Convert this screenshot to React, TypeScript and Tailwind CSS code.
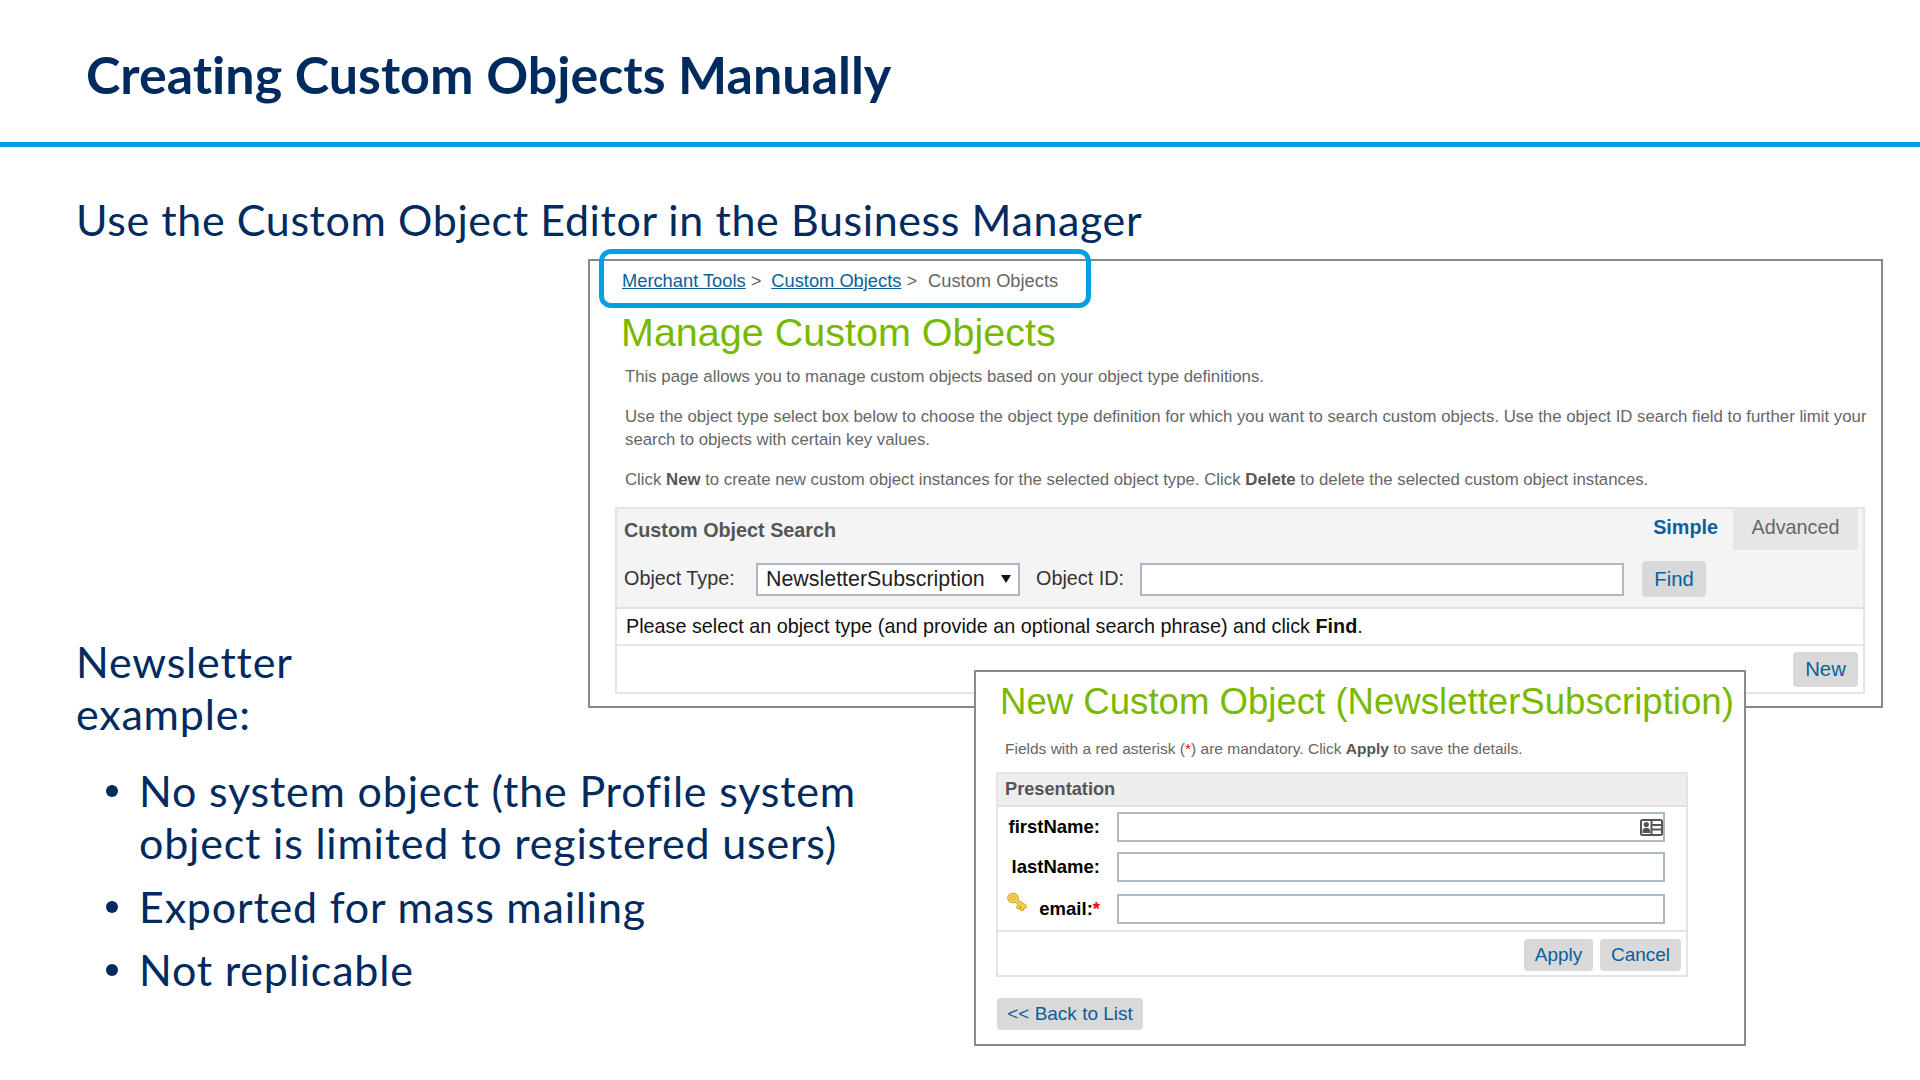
import React from 'react';

const navy = 'text-[#002b5f]';

const Btn = ({ label, className }: { label: string; className: string }) => (
  <button className={`flex items-center justify-center rounded-[4px] bg-[#d9d9d9] text-[#0b5e9c] ${className}`}>
    {label}
  </button>
);

const KeyIcon = () => (
  <svg viewBox="0 0 20 20" className="h-[20px] w-[20px]" fill="none" strokeLinecap="round">
    <g stroke="#c8981e" strokeWidth="4.4">
      <ellipse cx="6" cy="6" rx="3.6" ry="3" />
      <path d="M9 8.5 17.5 14.5M13.5 11.5 11.5 15M16.5 13.5 15 17" />
    </g>
    <g stroke="#f2cf4e" strokeWidth="2.8">
      <ellipse cx="6" cy="6" rx="3.6" ry="3" />
      <path d="M9 8.5 17.5 14.5M13.5 11.5 11.5 15M16.5 13.5 15 17" />
    </g>
  </svg>
);

const ContactIcon = () => (
  <svg viewBox="0 0 23 17" className="h-[17px] w-[23px]">
    <rect x="0" y="0" width="23" height="17" rx="2.5" fill="#555" />
    <rect x="2" y="2" width="19" height="13" fill="#fff" />
    <rect x="10.5" y="2" width="2" height="13" fill="#555" />
    <path d="M12 6h9M12 10.5h9" stroke="#555" strokeWidth="2" />
    <circle cx="6.3" cy="5.5" r="2.6" fill="#555" />
    <path d="M2.5 14v-1.8c0-2.5 1.8-3.4 3.8-3.4s3.8.9 3.8 3.4V14z" fill="#555" />
  </svg>
);

const Field = ({ label, star, icon, after }: { label: string; star?: boolean; icon?: boolean; after?: React.ReactNode }) => (
  <div className="flex h-[30px] items-center">
    <div className="relative flex w-[102px] justify-end text-[18.5px] font-bold text-black">
      {icon && (
        <span className="absolute left-[9px] top-[-3px]">
          <KeyIcon />
        </span>
      )}
      <span>{label}</span>
      {star && <span className="text-[#f00]">*</span>}
    </div>
    <div className="relative ml-[17px] h-[30px] w-[548px] border-2 border-[#aeb8c4] bg-white">
      {after}
    </div>
  </div>
);

const App = () => {
  return (
    <div className="h-[1080px] w-[1920px] overflow-hidden bg-white font-['Liberation_Sans',Arial,sans-serif]">
      <header className="flex h-[147px] items-center border-b-[5px] border-[#00a1e0] pl-[86px] pt-[5px]">
        <h1 className={`font-['Lato',sans-serif] text-[52px] font-bold [font-variant-ligatures:none] ${navy}`}>
          Creating Custom Objects Manually
        </h1>
      </header>

      <main className="pl-[76px]">
        <h2 className={`pt-[47px] font-['Lato',sans-serif] text-[43px] leading-[52px] tracking-[0.6px] ${navy}`}>
          Use the Custom Object Editor in the Business Manager
        </h2>

        <div className="flex">
          <aside className={`w-[512px] shrink-0 pt-[390px] font-['Lato',sans-serif] text-[43px] leading-[52px] tracking-[0.8px] ${navy}`}>
            <p className="w-[300px]">Newsletter example:</p>
            <ul className="mt-[25px] w-[800px] pl-[63px]">
              {['No system object (the Profile system object is limited to registered users)', 'Exported for mass mailing', 'Not replicable'].map(
                (item, i) => (
                  <li key={item} className={`relative w-[730px] ${i > 0 ? 'mt-[11.5px]' : ''}`}>
                    <span className="absolute left-[-33px] top-[20px] h-[12px] w-[12px] rounded-full bg-[#002b5f]" />
                    {item}
                  </li>
                )
              )}
            </ul>
          </aside>

          <section className="relative mt-[13px] flex w-[1295px] shrink-0 flex-col">
            <div className="relative h-[449px] border-2 border-[#888] bg-white pl-[25px] pr-[10px] text-[#666]">
              <div className="flex h-[31px] items-end gap-[5px] pl-[7px] text-[18.3px] leading-[22px]">
                <a className="text-[#0b5e9c] underline">Merchant Tools</a>
                <span className="mr-[5px]">&gt;</span>
                <a className="text-[#0b5e9c] underline">Custom Objects</a>
                <span className="mr-[6px]">&gt;</span>
                <span>Custom Objects</span>
              </div>
              <div className="pointer-events-none absolute left-[9px] top-[-12px] h-[59px] w-[492px] rounded-[12px] border-[5px] border-[#00a1e0]" />

              <h3 className="mt-[18px] pl-[6px] text-[39.5px] leading-[44px] text-[#78b900]">Manage Custom Objects</h3>
              <div className="pl-[10px] text-[16.8px] leading-[23px]">
                <p className="mt-[11px]">This page allows you to manage custom objects based on your object type definitions.</p>
                <p className="mt-[17px]">
                  Use the object type select box below to choose the object type definition for which you want to search custom objects. Use the object ID search field to further limit your search to objects with certain key values.
                </p>
                <p className="mt-[17px]">
                  Click <b className="text-[#555]">New</b> to create new custom object instances for the selected object type. Click <b className="text-[#555]">Delete</b> to delete the selected custom object instances.
                </p>
              </div>

              <div className="mt-[16px] h-[187px] w-[1250px] border-2 border-[#e4e4e4]">
                <div className="h-[100px] border-b-2 border-[#e0e0e0] bg-[#f4f4f4]">
                  <div className="flex h-[41px] items-center pl-[7px] pr-[5px]">
                    <span className="pt-[2px] text-[19.8px] font-bold text-[#555]">Custom Object Search</span>
                    <span className="mb-[3px] ml-auto mr-[15px] text-[19.8px] font-bold text-[#0b5e9c]">Simple</span>
                    <span className="flex h-[41px] w-[125px] items-center justify-center bg-[#e6e6e6] pb-[3px] text-[19.8px] text-[#666]">Advanced</span>
                  </div>
                  <div className="mt-[11px] flex items-center pl-[7px] text-[19.8px] text-[#333]">
                    <span className="w-[132px]">Object Type:</span>
                    <div className="flex h-[33px] w-[264px] items-center border-2 border-[#aeb8c4] bg-white pl-[8px] text-[21.4px] text-[#222]">
                      NewsletterSubscription
                      <svg viewBox="0 0 10 8" className="ml-[16px] h-[8px] w-[10px]">
                        <path d="M0 0h10L5 8z" fill="#111" />
                      </svg>
                    </div>
                    <span className="ml-[16px] w-[104px]">Object ID:</span>
                    <input className="h-[33px] w-[484px] border-2 border-[#aeb8c4] bg-white" />
                    <Btn label="Find" className="ml-[18px] h-[36px] w-[64px] text-[20.3px]" />
                  </div>
                </div>
                <div className="flex h-[37px] items-center border-b-2 border-[#e4e4e4] pl-[9px] text-[19.8px] text-[#111]">
                  <span>
                    Please select an object type (and provide an optional search phrase) and click <b>Find</b>.
                  </span>
                </div>
                <div className="flex justify-end pr-[5px] pt-[6px]">
                  <Btn label="New" className="h-[35px] w-[65px] text-[20.3px]" />
                </div>
              </div>
            </div>

            <div className="relative z-10 ml-[386px] mt-[-38px] h-[376px] w-[772px] border-2 border-[#888] bg-white pl-[20px]">
              <h3 className="mt-[8px] whitespace-nowrap pl-[4px] text-[36.6px] leading-[44px] text-[#78b900]">New Custom Object (NewsletterSubscription)</h3>
              <p className="mt-[15px] pl-[9px] text-[15.5px] leading-[20px] text-[#666]">
                Fields with a red asterisk (<span className="text-[#f00]">*</span>) are mandatory. Click <b className="text-[#555]">Apply</b> to save the details.
              </p>
              <div className="mt-[13px] h-[205px] w-[692px] border-2 border-[#e4e4e4]">
                <div className="flex h-[33px] items-center border-b-2 border-[#e0e0e0] bg-[#eee] pl-[7px] text-[18.2px] font-bold text-[#555]">
                  Presentation
                </div>
                <div className="flex h-[125px] flex-col gap-[10px] border-b-2 border-[#e4e4e4] pt-[5px]">
                  <Field
                    label="firstName:"
                    after={
                      <span className="absolute right-0 top-[5px]">
                        <ContactIcon />
                      </span>
                    }
                  />
                  <Field label="lastName:" />
                  <div className="mt-[2px]">
                    <Field label="email:" star icon />
                  </div>
                </div>
                <div className="flex justify-end gap-[7px] pr-[5px] pt-[7px]">
                  <Btn label="Apply" className="h-[32px] w-[69px] text-[19px]" />
                  <Btn label="Cancel" className="h-[32px] w-[81px] text-[19px]" />
                </div>
              </div>
              <Btn label="<< Back to List" className="ml-[1px] mt-[21px] h-[32px] w-[146px] text-[19px]" />
            </div>
          </section>
        </div>
      </main>
    </div>
  );
};

export default App;
